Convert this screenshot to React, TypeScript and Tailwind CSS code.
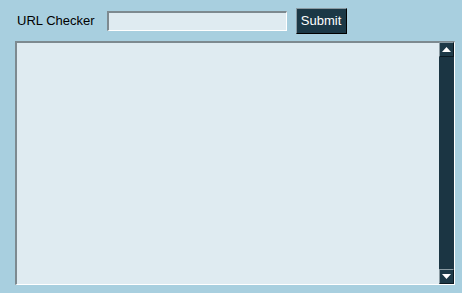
import { useState } from "react";

function ScrollArrow({ up }: { up?: boolean }) {
  return (
    <div className="flex h-[15px] w-[15px] items-center justify-center border border-t-[#8a9aa2] border-l-[#8a9aa2] border-b-[#0b1a22] border-r-[#0b1a22] bg-[#1d3947]">
      <svg width="9" height="5" viewBox="0 0 9 5">
        {up ? <polygon points="0,5 9,5 4.5,0" fill="#ffffff" /> : <polygon points="0,0 9,0 4.5,5" fill="#ffffff" />}
      </svg>
    </div>
  );
}

export default function App() {
  const [url, setUrl] = useState("");

  return (
    <div className="h-[293px] w-[462px] bg-[#a8cfdf] font-['Liberation_Sans',Arial,sans-serif] text-[13px]">
      <div className="flex h-[41px] items-center pb-[4px] pl-[17px] pt-[5px]">
        <span className="text-black">URL Checker</span>
        <input
          value={url}
          onChange={(e) => setUrl(e.target.value)}
          className="ml-[12px] h-[20px] w-[180px] border-t-2 border-l-2 border-b border-r border-t-[#7d8a90] border-l-[#7d8a90] border-b-white border-r-white bg-[#dfebf1] px-1 outline-none"
        />
        <button className="ml-[9px] h-[26px] w-[51px] border border-t-[#8a9aa2] border-l-[#8a9aa2] border-b-black border-r-black bg-[#1b3846] text-[13px] text-white">
          Submit
        </button>
      </div>
      <div className="ml-[15px] flex h-[244px] w-[440px] border-t-2 border-l-2 border-b border-r border-t-[#7d8a90] border-l-[#7d8a90] border-b-white border-r-white bg-[#dfebf1]">
        <textarea className="h-full flex-1 resize-none overflow-hidden bg-transparent p-1 outline-none" />
        <div className="-mt-[1px] flex w-[15px] flex-col bg-[#1b3543]">
          <ScrollArrow up />
          <div className="flex-1" />
          <ScrollArrow />
        </div>
      </div>
    </div>
  );
}
